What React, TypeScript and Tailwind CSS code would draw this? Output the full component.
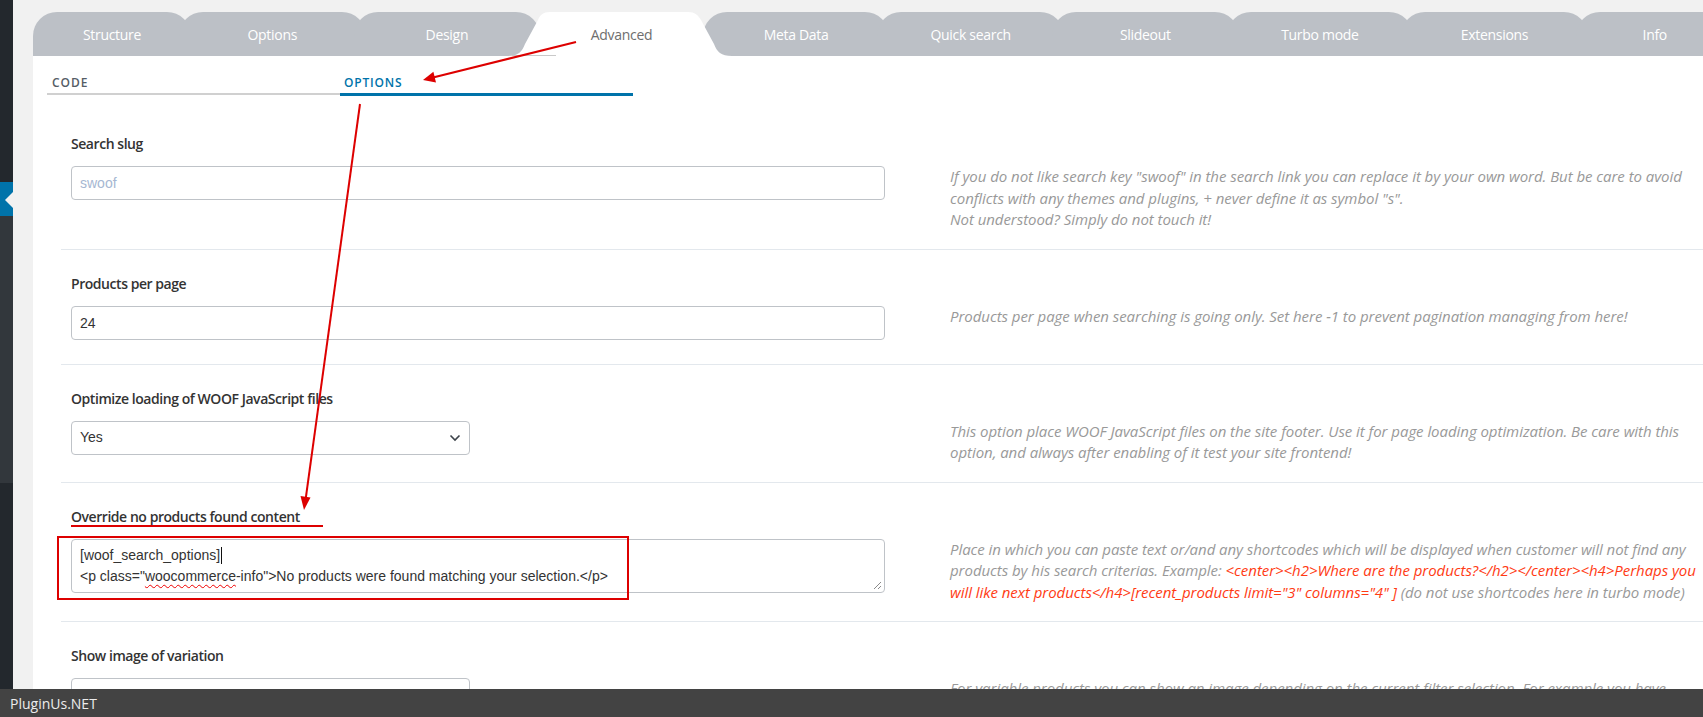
import React from "react";

const tabs = [
  "Structure",
  "Options",
  "Design",
  "Advanced",
  "Meta Data",
  "Quick search",
  "Slideout",
  "Turbo mode",
  "Extensions",
  "Info",
];

function Tabs() {
  return (
    <div className="flex h-[56px] shrink-0 pt-[12px]">
      {tabs.map((t, i) => {
        const first = i === 0;
        const last = i === tabs.length - 1;
        const width = first || last ? "w-[158px]" : "w-[186.6px]";
        const ml = first ? "" : "-ml-[12px]";
        if (t === "Advanced") {
          return (
            <div
              key={t}
              className={`relative z-10 flex h-[44px] shrink-0 items-center justify-center ${width} ${ml}`}
            >
              <svg
                className="absolute left-[-20px] top-0"
                width="224"
                height="44"
                viewBox="0 0 224 44"
              >
                <path
                  d="M0 44 C10 44 14 40 17 32 L30 8 C32 3 35 0 42 0 L180 0 C187 0 190 3 193 8 L206 32 C209 40 213 44 224 44 Z"
                  fill="#ffffff"
                />
              </svg>
              <div className="absolute left-[-16px] top-[43px] h-px w-[44px] bg-[#c9c9c9]" />
              <span className="relative font-['Open_Sans',sans-serif] text-[14px] tracking-[-0.3px] text-[#6e6e6e]">
                {t}
              </span>
            </div>
          );
        }
        return (
          <div
            key={t}
            className={`relative flex h-[44px] shrink-0 items-center justify-center rounded-t-[24px] bg-[#bcc0c6] ${width} ${ml}`}
          >
            <span className="font-['Open_Sans',sans-serif] text-[14px] tracking-[-0.3px] text-white">
              {t}
            </span>
          </div>
        );
      })}
    </div>
  );
}

function Label({ children }: { children: React.ReactNode }) {
  return (
    <div className="font-['Open_Sans',sans-serif] text-[14px] font-semibold leading-[20px] tracking-[-0.45px] text-[#333]">
      {children}
    </div>
  );
}

function Desc({ lines }: { lines: React.ReactNode[] }) {
  return (
    <div className="font-['Open_Sans',sans-serif] text-[15px] italic leading-[21.5px] tracking-[-0.05px] text-[#999]">
      {lines.map((l, i) => (
        <div key={i} className="whitespace-nowrap">
          {l}
        </div>
      ))}
    </div>
  );
}

function Chevron() {
  return (
    <svg width="12" height="8" viewBox="0 0 12 8" className="shrink-0">
      <polyline
        points="1.5,1.5 6,6 10.5,1.5"
        fill="none"
        stroke="#3c434a"
        strokeWidth="1.6"
      />
    </svg>
  );
}

function Row({
  first,
  label,
  control,
  desc,
}: {
  first?: boolean;
  label: string;
  control: React.ReactNode;
  desc: React.ReactNode[];
}) {
  return (
    <div className="flex border-b border-[#e3e8ed]">
      <div
        className={`w-[889px] shrink-0 pl-[10px] pb-[24px] ${first ? "pt-[38px]" : "pt-[24px]"}`}
      >
        <Label>{label}</Label>
        <div className="mt-[12px]">{control}</div>
      </div>
      <div className={`pb-[18px] ${first ? "pt-[70px]" : "pt-[56px]"}`}>
        <Desc lines={desc} />
      </div>
    </div>
  );
}

const arial = "font-['Liberation_Sans',Arial,sans-serif]";

export default function App() {
  const red = "text-[#ff3b14]";
  return (
    <div className="relative flex h-[717px] w-[1703px] overflow-hidden bg-[#f1f1f1]">
      {/* WP admin sidebar strip */}
      <div className="flex w-[13px] shrink-0 flex-col">
        <div className="h-[182px] bg-[#23282d]" />
        <div className="relative h-[34px] bg-[#0073aa]">
          <div className="absolute right-0 top-[10px] h-0 w-0 border-y-[8px] border-r-[8px] border-y-transparent border-r-[#f1f1f1]" />
        </div>
        <div className="h-[267px] bg-[#32373c]" />
        <div className="flex-1 bg-[#23282d]" />
      </div>

      {/* main column */}
      <div className="ml-[20px] flex min-w-0 flex-1 flex-col">
        <Tabs />
        <div className="flex-1 bg-white">
          {/* sub tabs */}
          <div className="ml-[14px] flex items-start">
            <div className="h-[39px] w-[293px] border-b-2 border-[#d0d0d0] pl-[5px] pt-[19px] font-['Open_Sans',sans-serif] text-[12px] font-semibold uppercase leading-[16px] tracking-[1px] text-[#555d66]">
              Code
            </div>
            <div className="h-[40px] w-[293px] border-b-[3px] border-[#0073aa] pl-[4px] pt-[19px] font-['Open_Sans',sans-serif] text-[12px] font-semibold uppercase leading-[16px] tracking-[0.8px] text-[#0073aa]">
              Options
            </div>
          </div>

          {/* option rows */}
          <div className="ml-[28px]">
            <Row
              first
              label="Search slug"
              control={
                <input
                  readOnly
                  placeholder="swoof"
                  className={`h-[34px] w-[814px] rounded-[4px] border border-[#bfc3c8] bg-white px-[8px] text-[14px] text-[#333] outline-none placeholder:text-[#a6b7d2] ${arial}`}
                />
              }
              desc={[
                'If you do not like search key "swoof" in the search link you can replace it by your own word. But be care to avoid',
                'conflicts with any themes and plugins, + never define it as symbol "s".',
                "Not understood? Simply do not touch it!",
              ]}
            />
            <Row
              label="Products per page"
              control={
                <input
                  readOnly
                  value="24"
                  className={`h-[34px] w-[814px] rounded-[4px] border border-[#bfc3c8] bg-white px-[8px] text-[14px] text-[#333] outline-none ${arial}`}
                />
              }
              desc={[
                "Products per page when searching is going only. Set here -1 to prevent pagination managing from here!",
              ]}
            />
            <Row
              label="Optimize loading of WOOF JavaScript files"
              control={
                <div
                  className={`flex h-[34px] w-[399px] items-center justify-between rounded-[4px] border border-[#bfc3c8] bg-white pl-[8px] pr-[8px] text-[14px] text-[#333] ${arial}`}
                >
                  <span>Yes</span>
                  <Chevron />
                </div>
              }
              desc={[
                "This option place WOOF JavaScript files on the site footer. Use it for page loading optimization. Be care with this",
                "option, and always after enabling of it test your site frontend!",
              ]}
            />
            <Row
              label="Override no products found content"
              control={
                <div
                  className={`relative h-[54px] w-[814px] rounded-[4px] border border-[#bfc3c8] bg-white px-[8px] pt-[5px] text-[14px] leading-[21px] text-[#333] ${arial}`}
                >
                  <div className="flex items-center">
                    <span>[woof_search_options]</span>
                    <span className="ml-px inline-block h-[17px] w-px bg-[#111]" />
                  </div>
                  <div className="whitespace-nowrap">
                    &lt;p class="
                    <span className="underline decoration-[#e00] decoration-wavy decoration-1 underline-offset-[3px]">
                      woocommerce
                    </span>
                    -info"&gt;No products were found matching your selection.&lt;/p&gt;
                  </div>
                  <svg
                    className="absolute bottom-[2px] right-[2px]"
                    width="9"
                    height="9"
                    viewBox="0 0 9 9"
                  >
                    <line x1="1" y1="8" x2="8" y2="1" stroke="#8a8a8a" strokeWidth="1" />
                    <line x1="5" y1="8" x2="8" y2="5" stroke="#8a8a8a" strokeWidth="1" />
                  </svg>
                </div>
              }
              desc={[
                "Place in which you can paste text or/and any shortcodes which will be displayed when customer will not find any",
                <>
                  products by his search criterias. Example:{" "}
                  <span className={red}>
                    &lt;center&gt;&lt;h2&gt;Where are the products?&lt;/h2&gt;&lt;/center&gt;&lt;h4&gt;Perhaps you
                  </span>
                </>,
                <>
                  <span className={red}>
                    will like next products&lt;/h4&gt;[recent_products limit="3" columns="4" ]
                  </span>{" "}
                  (do not use shortcodes here in turbo mode)
                </>,
              ]}
            />
            <Row
              label="Show image of variation"
              control={
                <div className="h-[34px] w-[399px] rounded-[4px] border border-[#bfc3c8] bg-white" />
              }
              desc={[
                "For variable products you can show an image depending on the current filter selection. For example you have",
              ]}
            />
          </div>
        </div>
      </div>

      {/* footer bar overlaying the page */}
      <div className="absolute bottom-0 left-0 right-0 z-20 flex h-[28px] items-center bg-[#434343] pl-[10px] font-['Open_Sans',sans-serif] text-[14px] text-[#ececec]">
        PluginUs.NET
      </div>

      {/* red annotations drawn over the screenshot */}
      <svg
        className="pointer-events-none absolute left-0 top-0 z-30"
        width="1703"
        height="717"
        viewBox="0 0 1703 717"
      >
        <line x1="576" y1="42" x2="433" y2="77.5" stroke="#dd0000" strokeWidth="2" />
        <polygon points="423,80 436,82.5 433.4,71.8" fill="#dd0000" />
        <line x1="360" y1="104" x2="305.8" y2="498" stroke="#dd0000" strokeWidth="2" />
        <polygon points="304,510 310.5,497.5 300.5,496" fill="#dd0000" />
        <rect x="71" y="525" width="252" height="2" fill="#dd0000" />
        <rect x="58" y="537" width="570" height="62" fill="none" stroke="#dd0000" strokeWidth="2" />
      </svg>
    </div>
  );
}
